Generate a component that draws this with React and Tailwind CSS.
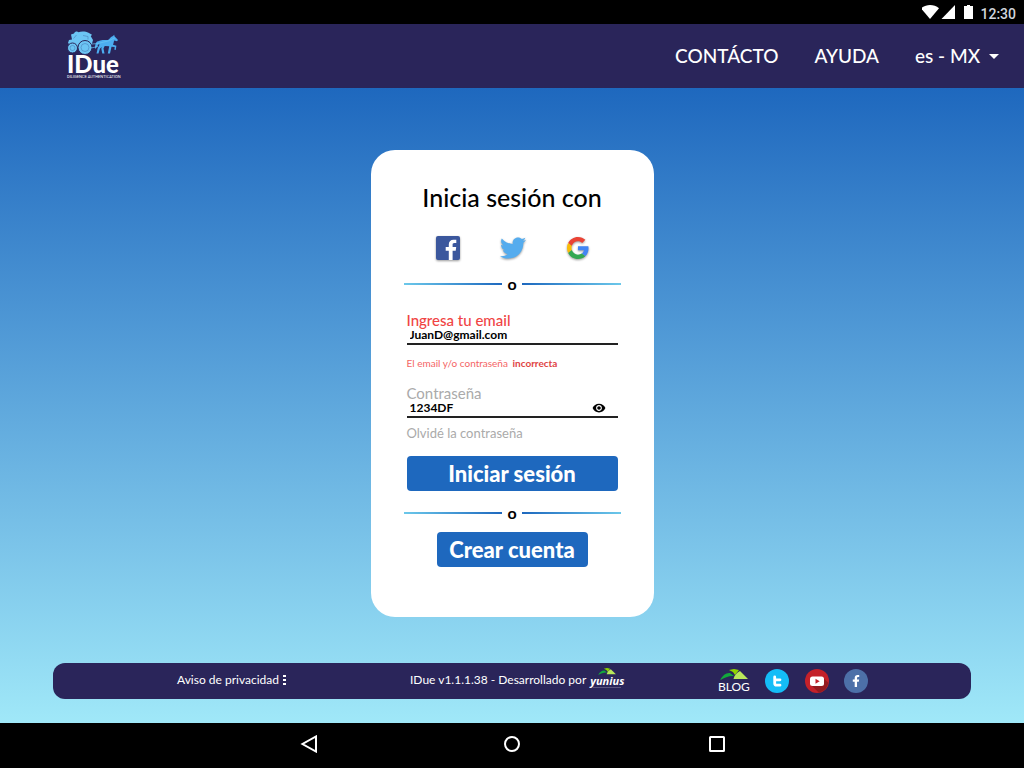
import React from 'react';
import { FaTwitter, FaFacebookF } from 'react-icons/fa';
import { MdVisibility } from 'react-icons/md';

const StatusBar = () => (
    <div className="flex h-6 items-center justify-end bg-black pr-2 text-white">
        <svg className="h-6 w-[54px]" viewBox="0 0 54 24" fill="currentColor" aria-hidden="true">
            <path d="M-1 8.300C4 3.900 12 3.900 17 8.300L8 19z" />
            <path d="M33 5v14H19.500z" />
            <path d="M42 6h3V5h3v1h3v13h-9z" />
        </svg>
        <span className="ml-1 pt-1 font-['Roboto',sans-serif] text-sm leading-5 font-medium text-gray-300">12:30</span>
    </div>
);

const Logo = () => (
    <a href="#inicio" className="flex w-[52px] flex-col" aria-label="IDue Diligence Authentication">
        <svg className="h-6 w-[52px]" viewBox="0 0 52 24" aria-hidden="true">
            {/* Carriage */}
            <path d="M4 3.500L7 2.500C8 .5 10 0 11.500 1.200 14 0 19 .2 21.500 1.800l3.500 2-1.200 1.500L26 9l-1.500 5.500-3 3H7L1 12l1-3 3-.5z" fill="#6cc5f4" />
            <g fill="#6cc5f4" stroke="#2a255a" strokeWidth="1">
                <circle cx="5.500" cy="17" r="5" />
                <circle cx="18" cy="16.500" r="7" />
            </g>
            <g fill="none" stroke="#4a7fba" strokeWidth="0.600">
                <circle cx="5.500" cy="17" r="2.500" />
                <circle cx="18" cy="16.500" r="4" />
                <path d="M6.500 7.500l3-3.500M16 4.500l5 1v3" />
            </g>
            {/* Horse */}
            <g fill="#4cadf0">
                <path d="M32 10c3-1.500 6-.7 9-1 2-1 2.500-3.500 5-4l1.200-1.200.3 1.500 3.500 3.700-1 1.300-2.800-.8c-.6 1.300-.4 2.700-1.200 4.200l3.400 1-.7 4.300-1.300-.2.300-2.800-3.200-.3-1.500 6.800h-2.200l1.400-7.200-4.500-.3-1.200 2.500 1 5h-2.200l-1-4.700.4-1.800-1.800 1.800-1.400 4.700h-2l1.300-5.700 1.500-2.500z" />
                <path d="M33 10c-4-.5-5 3-5 8 2-1 2.500-4.500 4.500-5.500z" />
            </g>
            <path d="M25 13l6-.500 10-2.500 7-3.200M24 17l7-1.500" fill="none" stroke="#6cc5f4" strokeWidth="0.700" />
        </svg>
        <span className="text-2xl leading-[17px] font-black text-white">IDue</span>
        <span className="font-['Roboto',sans-serif] text-[4px] leading-[9px] whitespace-nowrap text-white">DILIGENCE AUTHENTICATION</span>
    </a>
);

const Header = () => (
    <header className="flex h-16 items-center justify-between bg-[#2a255a] pr-[25px] pl-[67px] text-white">
        <Logo />
        <nav className="flex items-center gap-9 text-[19px] leading-6 font-medium">
            <a href="#contacto">CONTÁCTO</a>
            <a href="#ayuda">AYUDA</a>
            <div className="flex items-center gap-2">
                <select aria-label="Idioma" className="appearance-none bg-transparent text-white outline-none">
                    <option>es - MX</option>
                </select>
                <svg className="h-[5px] w-[10px]" viewBox="0 0 10 5" fill="currentColor" aria-hidden="true">
                    <path d="M0 0h10L5 5z" />
                </svg>
            </div>
        </nav>
    </header>
);

const Divider = () => (
    <div className="flex h-4 items-center">
        <span className="h-0.5 flex-1 bg-linear-to-r from-[#6cc8ea] to-[#1e68be]" />
        <span className="w-5 text-center text-base leading-4 font-bold">o</span>
        <span className="h-0.5 flex-1 bg-linear-to-l from-[#6cc8ea] to-[#1e68be]" />
    </div>
);

const SocialLogin = () => (
    <div className="mt-6 flex h-6 items-center justify-between px-8">
        <button type="button" aria-label="Facebook" className="drop-shadow-[0_1px_1px_rgba(0,0,0,0.4)]">
            <svg className="size-6" viewBox="0 0 24 24" aria-hidden="true">
                <rect width="24" height="24" rx="2" fill="#3b579d" />
                <path d="M16.600 24v-9.300h3.100l.5-3.600h-3.600V8.800c0-1 .3-1.800 1.800-1.800h1.900V3.800c-.3 0-1.500-.1-2.800-.1-2.800 0-4.700 1.700-4.700 4.800v2.600H9.700v3.600h3.100V24z" fill="#fff" />
            </svg>
        </button>
        <button type="button" aria-label="Twitter" className="drop-shadow-[0_1px_1px_rgba(0,0,0,0.4)]">
            <FaTwitter className="size-[26px] text-[#55acee]" />
        </button>
        <button type="button" aria-label="Google" className="drop-shadow-[0_1px_1px_rgba(0,0,0,0.4)]">
            <svg className="size-[22px]" viewBox="0 0 48 48" aria-hidden="true">
                <path d="M24 9.500c3.540 0 6.710 1.220 9.210 3.600l6.850-6.850C35.900 2.380 30.470 0 24 0 14.620 0 6.510 5.380 2.560 13.220l7.980 6.190C12.430 13.720 17.740 9.500 24 9.500z" fill="#ea4335" />
                <path d="M46.980 24.550c0-1.570-.15-3.090-.38-4.550H24v9.020h12.940c-.58 2.960-2.260 5.480-4.780 7.180l7.730 6c4.510-4.180 7.090-10.360 7.090-17.650z" fill="#4285f4" />
                <path d="M10.530 28.590c-.48-1.450-.76-2.990-.76-4.590s.27-3.140.76-4.590l-7.980-6.190C.92 16.460 0 20.120 0 24c0 3.880.92 7.540 2.560 10.780l7.970-6.190z" fill="#fbbc05" />
                <path d="M24 48c6.480 0 11.930-2.130 15.890-5.810l-7.730-6c-2.150 1.450-4.920 2.300-8.160 2.300-6.260 0-11.570-4.220-13.470-9.910l-7.980 6.190C6.510 42.620 14.620 48 24 48z" fill="#34a853" />
            </svg>
        </button>
    </div>
);

const LoginCard = () => (
    <section className="mx-auto w-[283px] rounded-3xl bg-white px-[33px] pt-8 pb-[50px] text-black">
        <h1 className="text-center text-[25px] leading-[30px] font-medium whitespace-nowrap">Inicia sesión con</h1>
        <SocialLogin />
        <div className="mt-4">
            <Divider />
        </div>

        <form className="px-[3px]" onSubmit={(e) => e.preventDefault()}>
            {/* Email */}
            <div className="mt-5">
                <label htmlFor="email" className="block text-[15px] leading-4 font-medium text-[#f04444]">Ingresa tu email</label>
                <input
                    id="email"
                    type="text"
                    defaultValue="JuanD@gmail.com"
                    className="block h-[17px] w-full border-b-2 border-[#222] pb-0.5 pl-[3px] text-xs leading-3 font-bold outline-none"
                />
            </div>
            <p className="mt-3 text-[10px] leading-3 text-[#f46464]">
                El email y/o contraseña <strong className="ml-0.5 font-bold text-[#e04444]">incorrecta</strong>
            </p>

            {/* Password */}
            <div className="mt-4">
                <label htmlFor="password" className="block text-[15px] leading-4 text-[#aaa]">Contraseña</label>
                <div className="flex h-[17px] items-center border-b-2 border-[#222] pr-3 pb-0.5">
                    <input
                        id="password"
                        type="text"
                        defaultValue="1234DF"
                        className="min-w-0 flex-1 pl-[3px] text-xs leading-3 font-bold outline-none"
                    />
                    <button type="button" aria-label="Mostrar contraseña">
                        <MdVisibility className="size-[14px]" />
                    </button>
                </div>
            </div>
            <a href="#recuperar" className="mt-2 block text-[13px] leading-[14px] text-[#aaa]">Olvidé la contraseña</a>

            <button type="submit" className="mt-4 block h-[35px] w-full rounded bg-[#1e68be] text-[22px] leading-6 font-black text-white">
                Iniciar sesión
            </button>
        </form>

        <div className="mt-[14px]">
            <Divider />
        </div>
        <button type="button" className="mx-auto mt-[11px] block h-[35px] w-[151px] rounded bg-[#1e68be] text-[22px] leading-6 font-black text-white">
            Crear cuenta
        </button>
    </section>
);

const Hills = ({ className }) => (
    <svg className={className} viewBox="0 0 28 11" aria-hidden="true">
        <path d="M0 11C3 6 6 3.500 10 4l4 3c-5-.5-9 1.500-14 4z" fill="#12a83b" />
        <path d="M9 1l5-1 5 1-4 5-2-3z" fill="#8fd400" />
        <path d="M20 2l8 8H13.500c1-4 3-6 6.500-8z" fill="#b9e85a" />
    </svg>
);

const Footer = () => (
    <footer className="mx-[53px] mb-6 grid h-9 grid-cols-[233fr_308fr_150fr] items-center rounded-xl bg-[#2a255a] pr-[103px] pl-[124px] text-xs leading-4 text-white">
        <a href="#privacidad" className="flex items-center gap-1 pb-0.5">
            Aviso de privacidad
            <svg className="h-[10px] w-[3px]" viewBox="0 0 3 10" fill="currentColor" aria-hidden="true">
                <path d="M0 0h3v2H0zM0 4h3v2H0zM0 8h3v2H0z" />
            </svg>
        </a>
        <div className="flex items-center gap-1 pb-0.5">
            <span>IDue v1.1.1.38 - Desarrollado por</span>
            <a href="#yunius" className="flex flex-col items-center pb-1">
                <Hills className="h-[7px] w-[18px]" />
                <span className="font-['Open_Sans',sans-serif] text-[11px] leading-3 font-bold italic">yunius</span>
                <span className="h-px w-7 bg-[#59557f]" />
            </a>
        </div>
        <div className="flex items-center justify-between">
            <a href="#blog" className="flex flex-col items-center">
                <Hills className="h-[11px] w-7" />
                <span className="text-xs leading-[14px]">BLOG</span>
            </a>
            <a href="#twitter" aria-label="Twitter">
                <svg className="size-6" viewBox="0 0 24 24" aria-hidden="true">
                    <circle cx="12" cy="12" r="12" fill="#14bdf7" />
                    <path d="M9.700 8v6.200q0 2 2 2H15M9.700 10.800H15" fill="none" stroke="#fff" strokeWidth="2.800" strokeLinecap="round" />
                </svg>
            </a>
            <a href="#youtube" aria-label="YouTube">
                <svg className="size-6" viewBox="0 0 24 24" aria-hidden="true">
                    <circle cx="12" cy="12" r="12" fill="#c4212a" />
                    <path d="M18 8.500l5.300 5.300A12 12 0 0 1 14 23.800L6 16z" fill="#941b20" />
                    <rect x="5" y="7.500" width="14" height="9.500" rx="2.500" fill="#fff" />
                    <path d="M10.500 9.700v5l4.200-2.500z" fill="#c4212a" />
                </svg>
            </a>
            <a href="#facebook" aria-label="Facebook" className="flex size-6 items-center justify-center rounded-full bg-[#4d70a8]">
                <FaFacebookF className="size-3" />
            </a>
        </div>
    </footer>
);

const NavigationBar = () => (
    <div className="grid h-[45px] grid-cols-[1fr_188px_188px_1fr] items-center bg-black pb-1 text-white">
        <button type="button" aria-label="Atrás" className="mr-1.5 justify-self-end">
            <svg className="size-[18px]" viewBox="0 0 18 18" fill="none" stroke="currentColor" strokeWidth="2" aria-hidden="true">
                <path d="M16 1.500v15L2.500 9z" />
            </svg>
        </button>
        <button type="button" aria-label="Inicio" className="col-span-2 justify-self-center">
            <svg className="size-[18px]" viewBox="0 0 18 18" fill="none" stroke="currentColor" strokeWidth="2" aria-hidden="true">
                <circle cx="9" cy="9" r="7" />
            </svg>
        </button>
        <button type="button" aria-label="Recientes" className="ml-2 justify-self-start">
            <svg className="size-[18px]" viewBox="0 0 18 18" fill="none" stroke="currentColor" strokeWidth="2" aria-hidden="true">
                <rect x="2" y="2" width="14" height="14" rx="0.500" />
            </svg>
        </button>
    </div>
);

const App = () => {
    return (
        <div className="flex min-h-screen flex-col font-['Lato',sans-serif]">
            <StatusBar />
            <Header />
            <div className="flex flex-1 flex-col justify-between bg-linear-to-b from-[#1e68be] to-[#a0e8f8]">
                <main className="pt-[62px] pb-[46px]">
                    <LoginCard />
                </main>
                <Footer />
            </div>
            <NavigationBar />
        </div>
    )
}

export default App;
